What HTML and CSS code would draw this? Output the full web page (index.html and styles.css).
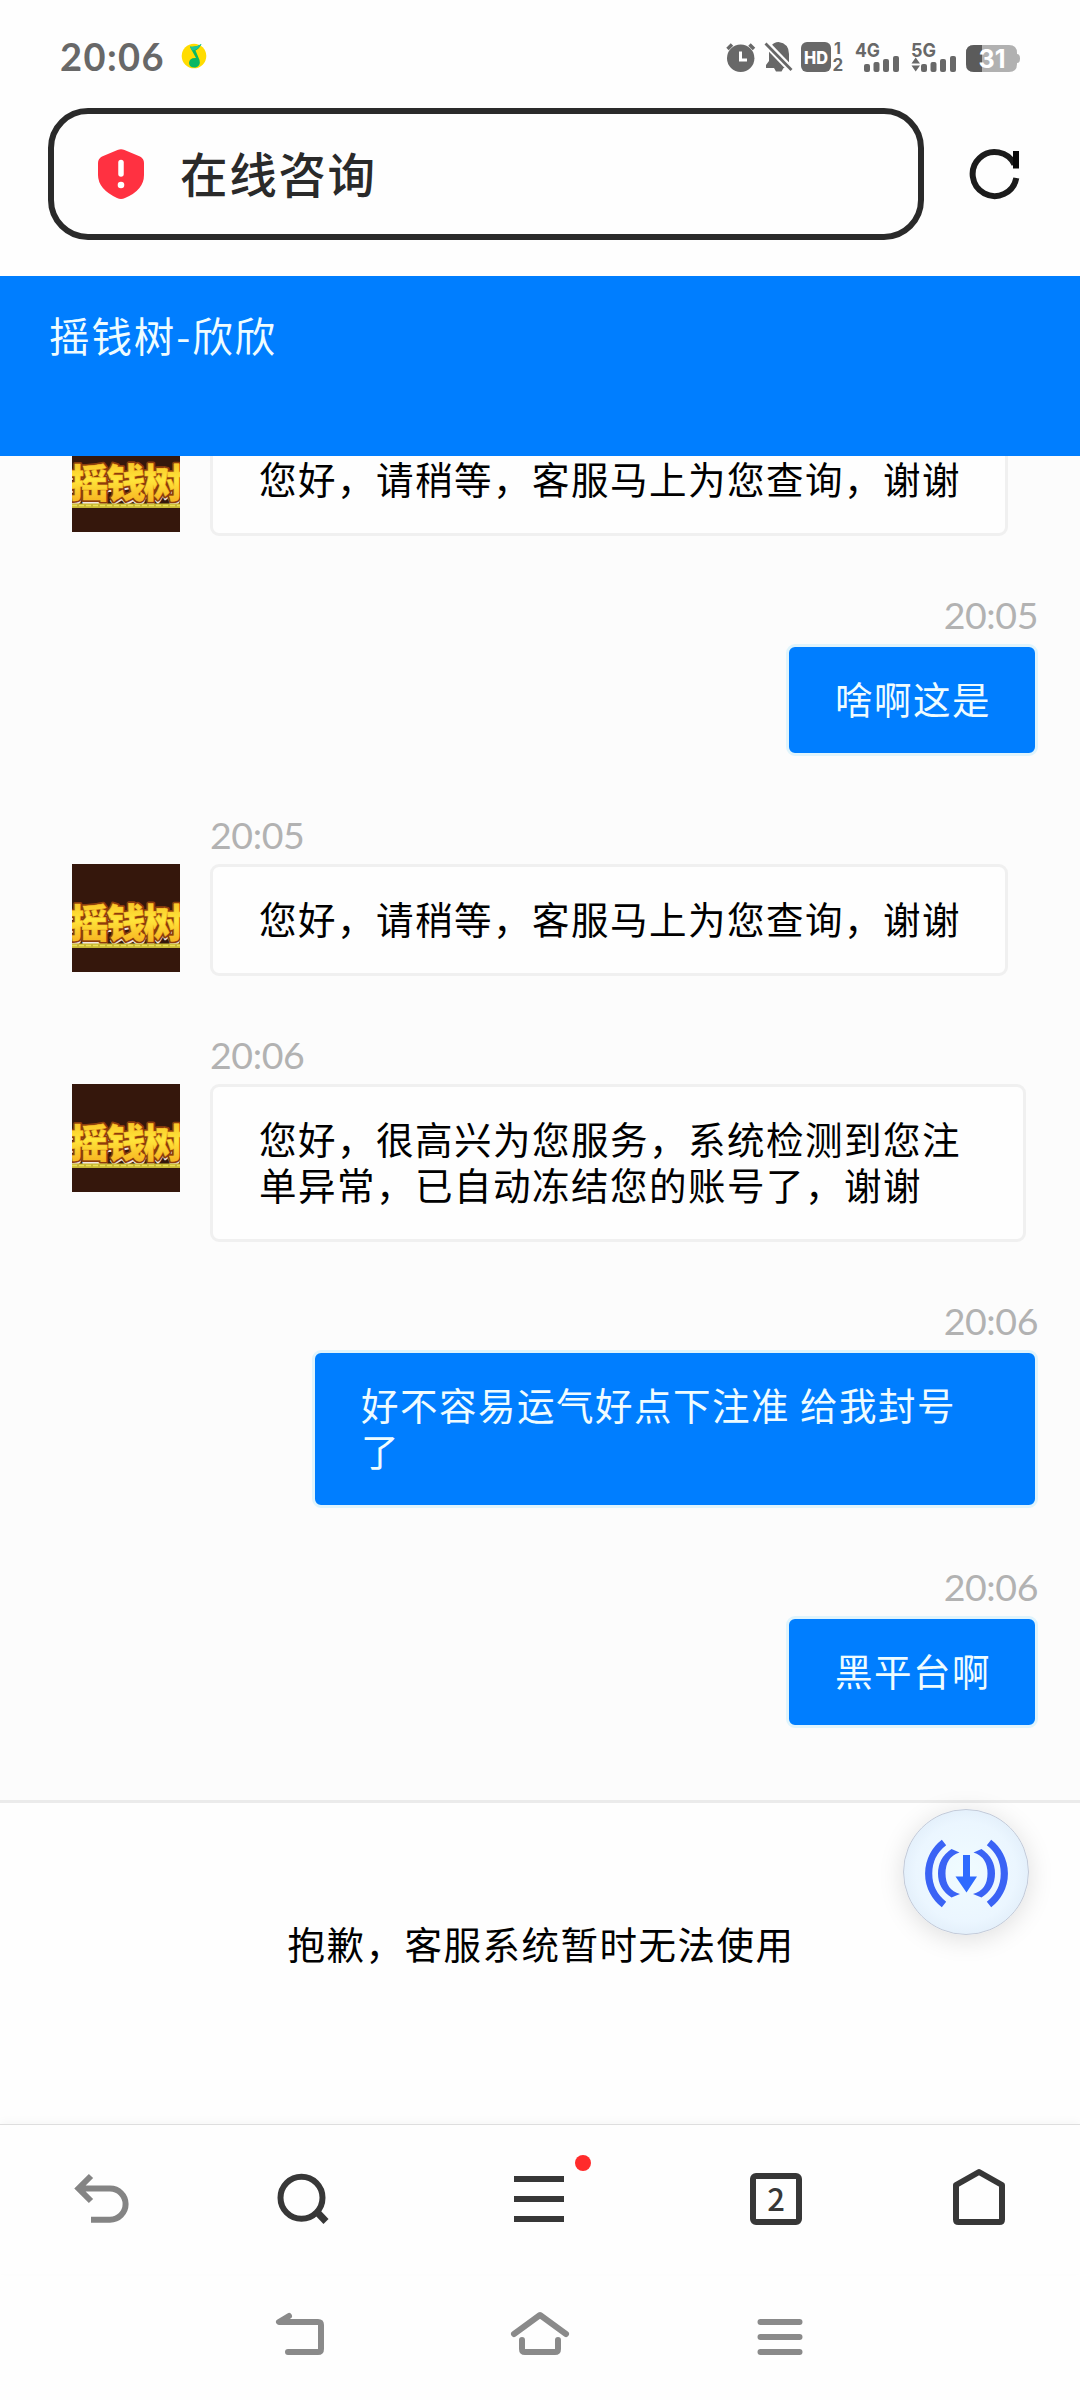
FILE: index.html
```html
<!DOCTYPE html>
<html lang="zh-CN">
<head>
<meta charset="utf-8">
<title>在线咨询</title>
<link rel="stylesheet" href="styles.css">
</head>
<body>
<svg class="defs" width="0" height="0" aria-hidden="true">
  <defs>
    <linearGradient id="gold" x1="0" y1="0" x2="0" y2="1">
      <stop offset="0" stop-color="#f6b41c"/>
      <stop offset=".5" stop-color="#ffe53a"/>
      <stop offset="1" stop-color="#f5a51a"/>
    </linearGradient>
    <radialGradient id="glow">
      <stop offset="0" stop-color="#f0fcff"/>
      <stop offset=".8" stop-color="#ebf6ff"/>
      <stop offset="1" stop-color="#e4f0fb"/>
    </radialGradient>
    <symbol id="logo" viewBox="0 0 108 108">
      <rect width="108" height="108" fill="#35170c"/>
      <g class="logo-text" text-anchor="middle">
        <g fill="#f3e3da" stroke="#f3e3da" stroke-width="2"><text x="17" y="76">摇</text><text x="54" y="76">钱</text><text x="91" y="76">树</text></g>
        <g fill="#a8520e" stroke="#8c3d0c" stroke-width="4"><text x="17" y="73">摇</text><text x="54" y="73">钱</text><text x="91" y="73">树</text></g>
        <g fill="url(#gold)" stroke="#fbc62a" stroke-width=".5"><text x="17" y="73">摇</text><text x="54" y="73">钱</text><text x="91" y="73">树</text></g>
      </g>
      <rect y="79.500" width="108" height="4.500" fill="#c9b833"/>
      <path d="M0 81.500H108" stroke="#eadf55" stroke-width="1.500" stroke-dasharray="5 2"/>
    </symbol>
  </defs>
</svg>

<div class="screen">
  <header class="status">
    <span class="clock">20:06</span>
    <svg class="music" width="26" height="26" viewBox="181 44 26 26">
      <circle cx="194" cy="57" r="12.300" fill="#ffdc00"/>
      <path d="M190 47.500Q196 48.500 201.500 45Q199 50 195.500 51.500L199.500 61Q201 67 195.500 68.500Q189.500 69 189 64Q189.500 58.500 196 59L190.500 49Z" fill="#08b763"/>
      <path d="M190 47.500Q196 48.500 201.500 45Q198 51 192 51.500Z" fill="#1cc49a"/>
    </svg>
    <div class="indicators">
      <svg width="36" height="36" viewBox="724 38 36 36">
        <circle cx="740.700" cy="58.300" r="13.700"/>
        <path d="M727.500 49L732 44.500M754 49L749.500 44.500" stroke="#686868" stroke-width="3.500"/>
        <path d="M740.500 51.500V60H747" fill="none" stroke="#fff" stroke-width="3"/>
      </svg>
      <svg width="38" height="36" viewBox="760 38 38 36">
        <path d="M769 49L788 68H766V65L769 61ZM771.500 45.500Q774 42 778.500 42Q789 43.500 789 54V63ZM774 68H783.500L781.500 71.500H776Z"/>
        <path d="M766 43.500L791 69.500" stroke="#fefefe" stroke-width="7"/>
        <path d="M765.500 43.500L791.500 70" stroke="#686868" stroke-width="2.800"/>
      </svg>
      <svg width="52" height="36" viewBox="798 38 52 36">
        <rect x="801" y="42" width="30" height="30" rx="6"/>
        <text class="hd" x="804" y="63.500" textLength="24" lengthAdjust="spacingAndGlyphs">HD</text>
        <text class="tiny" x="834" y="54" font-size="16">1</text>
        <text class="tiny" x="832.500" y="71" font-size="17">2</text>
      </svg>
      <svg width="56" height="36" viewBox="850 38 56 36">
        <text class="net" x="855" y="56.500" textLength="25" lengthAdjust="spacingAndGlyphs">4G</text>
        <g><rect x="864" y="64" width="6" height="8" rx="2"/><rect x="873.500" y="62" width="6" height="10" rx="2"/><rect x="883" y="59" width="6" height="13" rx="2"/><rect x="893" y="56" width="6" height="16" rx="2"/></g>
      </svg>
      <svg width="56" height="36" viewBox="906 38 56 36">
        <text class="net" x="911" y="56.500" textLength="25" lengthAdjust="spacingAndGlyphs">5G</text>
        <path d="M911.500 63.500L915.700 57.500L920 63.500ZM911.500 65.500H920L915.700 71.500Z"/>
        <g><rect x="921" y="64" width="6" height="8" rx="2"/><rect x="930.500" y="62" width="6" height="10" rx="2"/><rect x="940" y="59" width="6" height="13" rx="2"/><rect x="950" y="56" width="6" height="16" rx="2"/></g>
      </svg>
      <svg width="60" height="36" viewBox="962 38 60 36">
        <path d="M974 45H1009Q1017 45 1017 53V54Q1020 54 1020 58.500Q1020 63 1017 63V64Q1017 72 1009 72H974Q966 72 966 64V53Q966 45 974 45Z" fill="#b1b1b1"/>
        <path d="M982 45V72H974Q966 72 966 64V53Q966 45 974 45Z" fill="#5b5b5b"/>
        <text class="charge" x="978.500" y="67.500" textLength="27" lengthAdjust="spacingAndGlyphs">31</text>
      </svg>
    </div>
  </header>

  <div class="toolbar">
    <div class="address">
      <svg width="46" height="52" viewBox="98 148 46 52">
        <path d="M117.500 150Q121 148.500 124.500 150L140 156.500Q144 158.500 144 163V175Q144 190 125 198Q121 200 117 198Q98 189 98 175V163Q98 158.500 102 156.500Z" fill="#ff3141"/>
        <path d="M121 162.500V174" stroke="#fff" stroke-width="5.500" stroke-linecap="round"/>
        <circle cx="121" cy="185" r="3.300" fill="#fff"/>
      </svg>
      <span class="page-name">在线咨询</span>
    </div>
    <svg width="54" height="54" viewBox="968 147 54 54">
      <path d="M1014.500 164.500A22 22 0 1 0 1016.300 178" fill="none" stroke="#1b1b1b" stroke-width="6"/>
      <path d="M1016 151V168.500" stroke="#0a0a0a" stroke-width="6"/>
    </svg>
  </div>

  <div class="agent">摇钱树-欣欣</div>

  <main class="chat">
    <div class="message untimed">
      <svg class="avatar"><use href="#logo"/></svg>
      <div class="content">
        <p class="bubble">您好，请稍等，客服马上为您查询，谢谢</p>
      </div>
    </div>
    <div class="message mine">
      <div class="content">
        <time>20:05</time>
        <p class="bubble">啥啊这是</p>
      </div>
    </div>
    <div class="message">
      <svg class="avatar"><use href="#logo"/></svg>
      <div class="content">
        <time>20:05</time>
        <p class="bubble">您好，请稍等，客服马上为您查询，谢谢</p>
      </div>
    </div>
    <div class="message">
      <svg class="avatar"><use href="#logo"/></svg>
      <div class="content">
        <time>20:06</time>
        <p class="bubble">您好，很高兴为您服务，系统检测到您注单异常，已自动冻结您的账号了，谢谢</p>
      </div>
    </div>
    <div class="message mine">
      <div class="content">
        <time>20:06</time>
        <p class="bubble">好不容易运气好点下注准 给我封号了</p>
      </div>
    </div>
    <div class="message mine">
      <div class="content">
        <time>20:06</time>
        <p class="bubble">黑平台啊</p>
      </div>
    </div>
  </main>

  <section class="notice">
    <p>抱歉，客服系统暂时无法使用</p>
    <div class="float">
      <svg width="126" height="126" viewBox="903 1809 126 126">
        <circle cx="966" cy="1872" r="62.500" fill="url(#glow)" stroke="#c3cad8"/>
        <g fill="none" stroke="#3a63f5" stroke-width="7.200">
          <path d="M944 1842.500A39 39 0 0 0 944 1904.500"/>
          <path d="M989 1842.500A39 39 0 0 1 989 1904.500"/>
        </g>
        <g fill="#3a63f5">
          <path d="M951.500 1849L959.500 1852.500Q945.500 1857 945.500 1873.500Q945.500 1890 960 1894L951.500 1897.500Q938 1889 938 1873.500Q938 1858 951.500 1849Z"/>
          <path d="M981.500 1849L973.500 1852.500Q987.500 1857 987.500 1873.500Q987.500 1890 973 1894L981.500 1897.500Q995 1889 995 1873.500Q995 1858 981.500 1849Z"/>
        </g>
        <path d="M963 1855H970V1876.500H977L966.500 1892.500L955.500 1876.500H963Z" fill="#2e6bff"/>
      </svg>
    </div>
  </section>

  <nav class="browser-nav">
    <svg width="60" height="60" viewBox="72 2167 60 60">
      <path d="M91 2176L78.500 2188.500L91 2201M80 2188.500H110A15.500 15.500 0 0 1 110 2219.700H91" fill="none" stroke="#848484" stroke-width="6"/>
    </svg>
    <svg width="60" height="60" viewBox="272 2167 60 60">
      <circle cx="301.500" cy="2197.700" r="21" fill="none" stroke="#373737" stroke-width="6"/>
      <path d="M316 2211L326 2221.500" stroke="#373737" stroke-width="7"/>
    </svg>
    <svg width="84" height="72" viewBox="510 2155 84 72">
      <path d="M514 2179H564M514 2199H564M514 2219H564" stroke="#373737" stroke-width="6"/>
      <circle cx="583" cy="2163" r="8" fill="#ff2b2b"/>
    </svg>
    <div class="tabs">2</div>
    <svg width="60" height="60" viewBox="949 2167 60 60">
      <path d="M979 2172L1002 2185V2219.500Q1002 2222 999.500 2222H958.500Q956 2222 956 2219.500V2185Z" fill="none" stroke="#373737" stroke-width="6" stroke-linejoin="round"/>
    </svg>
  </nav>

  <footer class="system-nav">
    <svg width="60" height="50" viewBox="270 2310 60 50"><path d="M289 2316L279 2322H318Q321 2322 321 2325V2349Q321 2352 318 2352H288"/></svg>
    <svg width="60" height="50" viewBox="510 2310 60 50"><path d="M514 2334L540 2315L566 2334M522 2340V2349Q522 2352 525 2352H555Q558 2352 558 2349V2340"/></svg>
    <svg width="60" height="50" viewBox="750 2310 60 50"><path d="M760.500 2322H799.500M760.500 2337H799.500M760.500 2352H799.500"/></svg>
  </footer>
</div>
</body>
</html>
```
FILE: styles.css
```css
* {
  box-sizing: border-box;
}

body {
  margin: 0;
  background: #fefefe;
  font-family: "Noto Sans CJK SC", sans-serif;
  color: #000;
}

p {
  margin: 0;
}

svg {
  display: block;
  flex: none;
}

.defs {
  position: absolute;
}

.screen {
  width: 1080px;
  height: 2400px;
  display: flex;
  flex-direction: column;
  overflow: hidden;
}

/* Phone status bar */
.status {
  height: 108px;
  padding: 4px 58px 0 60px;
  display: flex;
  align-items: center;
}

.clock {
  width: 121px;
  font: 700 38px/46px Lato, sans-serif;
  letter-spacing: 1.4px;
  color: #686868;
}

.indicators {
  display: flex;
  margin-left: auto;
  fill: #686868;
  font-family: Inter, sans-serif;
}

.hd {
  fill: #fff;
  font-size: 18px;
  font-weight: 800;
}

.tiny {
  font-weight: 700;
}

.net {
  font-size: 19px;
  font-weight: 700;
}

.charge {
  fill: #fff;
  font-size: 25px;
  font-weight: 700;
}

/* Address bar */
.toolbar {
  height: 168px;
  padding: 0 58px 0 48px;
  display: flex;
  justify-content: space-between;
  align-items: flex-start;
}

.toolbar > svg {
  margin-top: 39px;
}

.address {
  width: 876px;
  height: 132px;
  padding-left: 44px;
  border: 6px solid #2a2a2a;
  border-radius: 40px;
  display: flex;
  align-items: center;
  gap: 36px;
}

.page-name {
  padding-bottom: 3px;
  font-size: 47.500px;
  font-weight: 500;
  line-height: 60px;
  letter-spacing: 1.7px;
  color: #2a2a2a;
}

/* Chat header */
.agent {
  height: 180px;
  padding: 30px 49px;
  background: #007eff;
  color: #effcff;
  font-size: 40.500px;
  line-height: 58px;
  letter-spacing: 1.9px;
}

/* Conversation */
.chat {
  height: 1344px;
  padding: 0 42px 72px 72px;
  background: #fcfcfc;
  display: flex;
  flex-direction: column;
  justify-content: flex-end;
  gap: 58px;
  overflow: hidden;
}

.message {
  display: flex;
  gap: 30px;
}

.avatar {
  width: 108px;
  height: 108px;
  margin-top: 50px;
}

.untimed .avatar {
  margin-top: 0;
}

.logo-text {
  font: 900 39px "Noto Sans CJK SC", sans-serif;
  stroke-linejoin: round;
}

.content {
  display: flex;
  flex-direction: column;
  align-items: flex-start;
}

.content time {
  height: 50px;
  font: 400 37.500px/42px Lato, sans-serif;
  letter-spacing: -.4px;
  color: #b2b2b2;
}

.bubble {
  max-width: 816px;
  padding: 28px 44px 32px 46px;
  border: 3px solid #f0f0f0;
  border-radius: 9px;
  background: #fefefe;
  font-size: 37.500px;
  line-height: 46px;
  letter-spacing: 1.5px;
}

.mine {
  justify-content: flex-end;
}

.mine .content {
  align-items: flex-end;
}

.mine .bubble {
  max-width: 726px;
  border-color: #e0f4fc;
  background: #007eff;
  color: #effcff;
}

/* Service notice */
.notice {
  position: relative;
  height: 324px;
  padding: 117px 0 0 2px;
  border-top: 3px solid #ebebeb;
  text-align: center;
  font-size: 37.500px;
  line-height: 46px;
  letter-spacing: 1.5px;
}

.float {
  position: absolute;
  top: 6px;
  right: 51px;
  border-radius: 50%;
  box-shadow: 0 4px 26px rgba(0, 0, 0, .13);
}

/* Browser controls */
.browser-nav {
  height: 150px;
  padding: 42px 71px 0 72px;
  border-top: 1px solid #dedede;
  box-shadow: 0 -3px 8px rgba(0, 0, 0, .03);
  display: flex;
  align-items: flex-start;
}

.browser-nav svg:nth-child(2) {
  margin-left: 140px;
}

.browser-nav svg:nth-child(3) {
  margin: -12px 0 0 178px;
}

.tabs {
  width: 52px;
  height: 52px;
  margin: 6px 147px 0 156px;
  border: 6px solid #373737;
  border-radius: 6px;
  font: 500 31px/38px "Noto Sans CJK SC", sans-serif;
  text-align: center;
  color: #373737;
}

/* System navigation */
.system-nav {
  padding: 36px 270px 0;
  display: flex;
  justify-content: space-between;
  fill: none;
  stroke: #8a8a8a;
  stroke-width: 6px;
  stroke-linecap: round;
  stroke-linejoin: round;
}
```
